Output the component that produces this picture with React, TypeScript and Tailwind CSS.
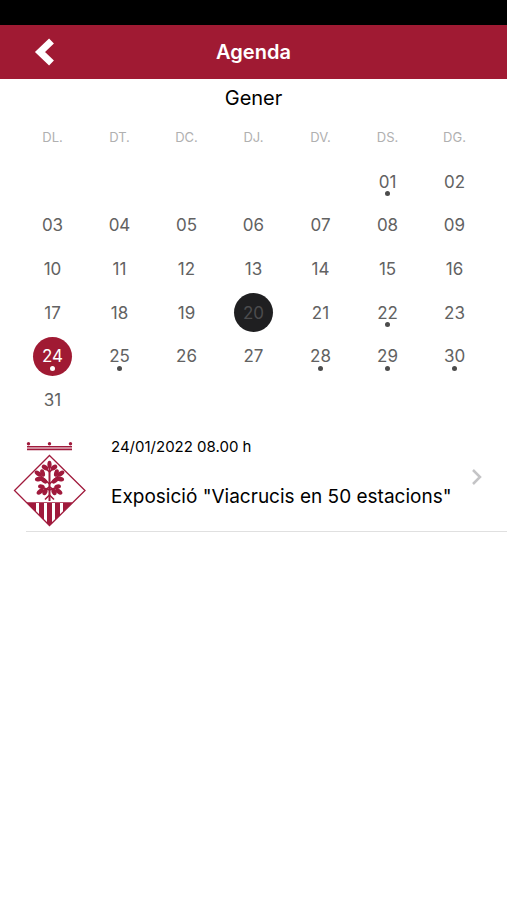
import React from 'react';

const weekdays = ['DL.', 'DT.', 'DC.', 'DJ.', 'DV.', 'DS.', 'DG.'];

const weeks = [
    ['', '', '', '', '', '01', '02'],
    ['03', '04', '05', '06', '07', '08', '09'],
    ['10', '11', '12', '13', '14', '15', '16'],
    ['17', '18', '19', '20', '21', '22', '23'],
    ['24', '25', '26', '27', '28', '29', '30'],
    ['31', '', '', '', '', '', ''],
];

const today = '20';
const selected = '24';
const eventDays = ['01', '22', '24', '25', '28', '29', '30'];

const dayColor = (day: string) => {
    if (day === selected) return 'bg-[#a01a33] text-white';
    if (day === today) return 'bg-[#1f1f21] text-[#4c4c4e]';
    return 'text-[#626262]';
};

const Day: React.FC<{ day: string }> = ({ day }) => (
    <button className={`relative mx-auto flex size-[39px] items-center justify-center rounded-full text-[17px] leading-5 ${dayColor(day)}`}>
        {day}
        {eventDays.includes(day) && (
            <span className={`absolute bottom-[5px] left-[17px] size-[5px] rounded-full ${day === selected ? 'bg-white' : 'bg-[#4c4c4c]'}`} />
        )}
    </button>
);

// Leaves on the left half of the branch: x, y, length, angle. The right half mirrors them.
const leaves = [
    [33, 29.5, 3.6, -55],
    [26.2, 35.6, 4, -55],
    [30.6, 35, 3.8, -15],
    [27, 41, 4.2, -105],
    [32, 42.6, 3.8, -50],
    [28.2, 53.4, 4.2, 50],
    [33, 54, 3.4, 25],
    [29.4, 48.6, 3.4, -75],
];

const HalfBranch: React.FC = () => (
    <g>
        {leaves.map(([x, y, length, angle]) => (
            <ellipse key={`${x}-${y}`} cx={x} cy={y} rx="2.3" ry={length} transform={`rotate(${angle} ${x} ${y})`} />
        ))}
        <path d="M37.5 34 32 29M37.5 46 29 38M37.5 52 29 49M37.5 49 30 54M37.5 57 33 61.5" fill="none" stroke="#a01a3c" strokeWidth="1.6" />
    </g>
);

const Emblem: React.FC = () => (
    <svg viewBox="0 0 76 90" className="h-[90px] w-[76px] shrink-0" fill="#a01a3c" aria-hidden="true">
        {/* Crown */}
        <circle cx="16.5" cy="5.7" r="1.7" />
        <circle cx="37.5" cy="5.7" r="1.7" />
        <circle cx="58.5" cy="5.7" r="1.7" />
        <path d="M15 8h45v1.5H15zM15 10.6h45v1.6H15z" />
        {/* Shield */}
        <path d="M37.5 17.5 73 52.5 37.5 87.5 2.5 52.5z" fill="none" stroke="#a01a3c" strokeWidth="1.3" />
        <path d="M15 64.3h45v.8H15z" />
        <path d="M15 65h9v9zM27 65h5v17l-5-5zM35 65h5v20l-2.5 2.5L35 85zM43 65h5v12l-5 5zM51 65h9l-9 9z" />
        {/* Branch */}
        <path d="M36.5 26h2v37h-2z" />
        <ellipse cx="37.5" cy="26.5" rx="2.1" ry="3.8" />
        <HalfBranch />
        <g transform="matrix(-1 0 0 1 75 0)">
            <HalfBranch />
        </g>
    </svg>
);

const App: React.FC = () => {
    return (
        <div className="min-h-screen bg-white font-['Inter',sans-serif]">
            <div className="h-[25px] bg-black" />
            <header className="grid h-[54px] grid-cols-[1fr_auto_1fr] items-center bg-[#a01a33] text-white">
                <button aria-label="Enrere" className="ml-8 w-7">
                    <svg viewBox="0 0 28 28" className="size-7" fill="none" stroke="currentColor" strokeWidth="7">
                        <path d="M19.5 3 8 14l11.5 11" />
                    </svg>
                </button>
                <h1 className="text-xl leading-6 font-semibold">Agenda</h1>
            </header>

            <main>
                <h2 className="pt-[7px] text-center text-xl leading-6 text-black">Gener</h2>
                <div className="px-[19px] pt-3">
                    <table className="h-[300px] w-full table-fixed border-collapse">
                        <thead>
                            <tr className="h-[38px]">
                                {weekdays.map((name) => (
                                    <th key={name} className="p-0 pb-2 align-middle text-[13px] leading-4 font-normal text-[#b0b0b0]">{name}</th>
                                ))}
                            </tr>
                        </thead>
                        <tbody>
                            {weeks.map((week, index) => (
                                <tr key={index}>
                                    {week.map((day, i) => (
                                        <td key={i} className="p-0">{day && <Day day={day} />}</td>
                                    ))}
                                </tr>
                            ))}
                        </tbody>
                    </table>
                </div>

                <a href="#event" className="flex items-center pt-[15px] pl-3 text-black">
                    <Emblem />
                    <div className="ml-[23px] min-w-0 flex-1 pb-5">
                        <p className="text-[15px] leading-5">24/01/2022 08.00 h</p>
                        <p className="mt-7 text-[19px] leading-6">Exposició "Viacrucis en 50 estacions"</p>
                    </div>
                    <svg viewBox="0 0 12 18" className="mr-6 mb-3 h-[18px] w-3" fill="none" stroke="#c4c4c6" strokeWidth="2.5">
                        <path d="M2 2l7 7-7 7" />
                    </svg>
                </a>
                <hr className="mt-0.5 ml-[26px] border-[#e0e0e0]" />
            </main>
        </div>
    );
};

export default App;
